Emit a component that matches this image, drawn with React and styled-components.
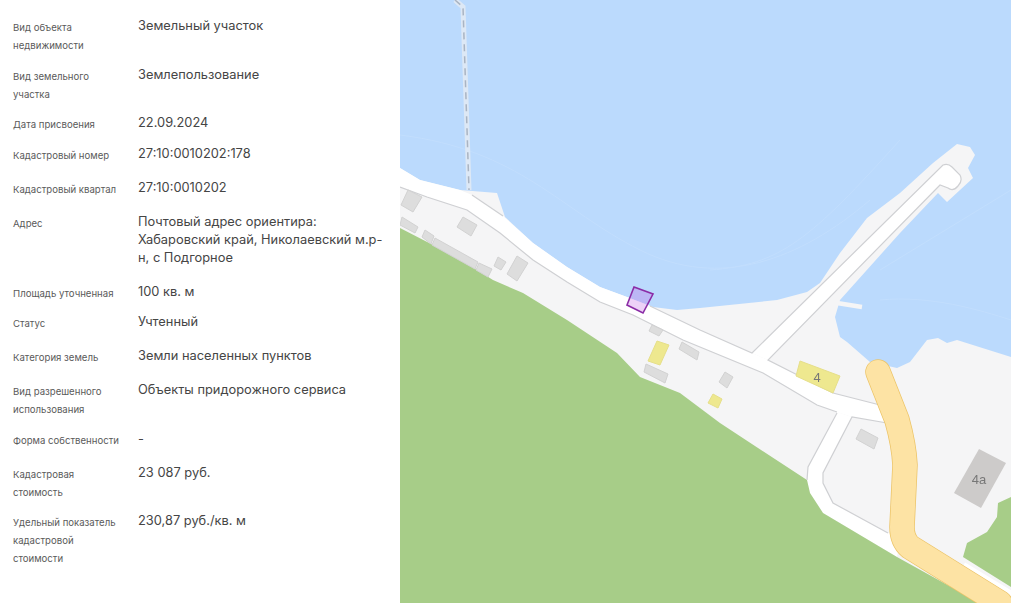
import React from "react";
import styled, { createGlobalStyle } from "styled-components";

const Global = createGlobalStyle`
  html, body { margin: 0; padding: 0; background: #fff; }
  body { font-family: Inter, "Noto Sans", sans-serif; overflow: hidden; }
`;

const Page = styled.div`
  display: flex;
  width: 1011px;
  height: 603px;
  overflow: hidden;
`;

const Panel = styled.section`
  flex: 0 0 400px;
  box-sizing: border-box;
  padding: 18px 0 0 13px;
  background: #fff;
`;

const Row = styled.div`
  display: grid;
  grid-template-columns: 110px 245px;
  column-gap: 15px;
  margin-bottom: ${(p) => p.$after}px;
`;

const Label = styled.div`
  font-size: 9.6px;
  line-height: 18px;
  color: #5a5a5a;
  position: relative;
  top: 0.5px;
`;

const Value = styled.div`
  font-size: 12.85px;
  line-height: 18px;
  color: #454545;
  position: relative;
  top: -1px;
`;

const MapPane = styled.div`
  flex: 1 1 auto;
  height: 603px;
  background: #bbdafd;
`;

const MapSvg = styled.svg`
  display: block;
  width: 611px;
  height: 603px;
  filter: blur(0.35px);
`;

const rows = [
  { label: "Вид объекта недвижимости", value: "Земельный участок", after: 13 },
  { label: "Вид земельного участка", value: "Землепользование", after: 12 },
  { label: "Дата присвоения", value: "22.09.2024", after: 13 },
  { label: "Кадастровый номер", value: "27:10:0010202:178", after: 16 },
  { label: "Кадастровый квартал", value: "27:10:0010202", after: 16 },
  { label: "Адрес", value: "Почтовый адрес ориентира: Хабаровский край, Николаевский м.р-\u200bн, с Подгорное", after: 16 },
  { label: "Площадь уточненная", value: "100 кв. м", after: 12 },
  { label: "Статус", value: "Учтенный", after: 16 },
  { label: "Категория земель", value: "Земли населенных пунктов", after: 16 },
  { label: "Вид разрешенного использования", value: "Объекты придорожного сервиса", after: 13 },
  { label: "Форма собственности", value: "-", after: 16 },
  { label: "Кадастровая стоимость", value: "23 087 руб.", after: 12 },
  { label: "Удельный показатель кадастровой стоимости", value: "230,87 руб./кв. м", after: 0 },
];

const LAND =
  "M400 168 L420 180 L460 190 L497 193 L505 217 L533 243 L567 267 L600 287 L627 297 L653 307 L677 310 L700 308 L777 300 L807 292 L820 283 L840 253 L867 218 L900 193 L933 163 L957 144 L970 147 L975 155 L968 168 L973 178 L947 202 L938 193 L900 233 L840 300 L835 317 L840 337 L847 342 L870 362 L897 368 L910 362 L927 340 L938 338 L947 343 L957 340 L1011 357 L1011 603 L400 603 Z";
const GREEN_MAIN =
  "M400 228 L433 245 L477 270 L493 280 L523 293 L567 320 L617 353 L640 377 L680 393 L720 423 L807 480 L810 493 L823 513 L897 557 L980 603 L400 603 Z";
const GREEN_RIGHT =
  "M1011 497 L998 503 L997 517 L987 532 L967 543 L963 557 L1011 587 Z";
const ROAD_MAIN =
  "M400 168 L420 180 L460 190 L472 195 L503 216 L533 243 L567 267 L600 287 L627 297 L650 306 L700 330 L752 353 L768 360 L833 393 L880 405 L900 409 L900 425 L887 423 L852 417 L837 412 L817 405 L763 373 L683 340 L633 315 L600 302 L567 282 L533 260 L500 233 L467 210 L427 197 L400 187 Z";
const ROAD_PIER =
  "M752 353 L943 165 Q948 163 952 167 L960 175 Q963 181 958 186 Q953 192 948 188 L940 185 L768 360 Z";
const ROAD_BRANCH =
  "M837 412 L808 467 L807 480 L810 493 L823 513 L897 557 L900 538 L888 533 L833 503 L823 483 L823 473 L852 417 Z";

const grayBuildings = [
  "408,190 422,197 413,212 401,205",
  "402,217 418,227 415,233 400,225",
  "463,217 477,225 471,236 457,227",
  "425,230 434,236 431,244 422,237",
  "435,238 478,262 475,269 432,245",
  "479,263 492,269 488,277 476,270",
  "498,257 506,262 501,270 494,266",
  "517,256 528,263 517,281 507,274",
  "652,325 663,330 659,336 649,331",
  "682,342 699,352 697,360 679,349",
  "646,364 668,374 665,383 644,372",
  "725,372 733,377 727,388 719,382",
  "861,429 878,438 874,449 856,439",
];
const yellowBuildings = [
  "657,341 669,345 660,365 648,361",
  "713,394 722,399 718,408 708,403",
  "800,361 840,376 833,393 796,376",
];
const edgeLines = [
  "M400 187 L427 197 L467 210 L500 233 L533 260 L567 282 L600 302 L633 315 L683 340 L763 373 L817 405 L837 412",
  "M472 195 L503 216",
  "M650 306 L700 330 L752 353 L943 165 Q948 163 952 167 L960 175 Q963 181 958 186 Q953 192 948 188 L940 185 L768 360 L833 393 L880 405",
  "M837 413 L808 467 L807 480",
  "M887 423 L852 417 L823 473 L823 483 L833 503 L888 533",
];

const ROAD_LINE = "M878 372 L897 420 Q904 445 905 465 L902 527 Q902 540 910 547 L1000 603";

function MapDrawing() {
  return (
    <MapSvg viewBox="400 0 611 603" xmlns="http://www.w3.org/2000/svg">
      <rect x="400" y="0" width="611" height="603" fill="#bbdafd" />
      <g fill="none" stroke="#c2defd" strokeWidth="1">
        <path d="M400 135 C520 150 560 210 640 250 S800 260 870 200" />
        <path d="M710 270 C780 265 810 240 900 140" />
        <path d="M880 300 C930 295 980 310 1011 320" />
        <path d="M880 270 L1011 190" />
      </g>
      <path d="M455 0 L463 7 L469 190" fill="none" stroke="#dde8f5" strokeWidth="5" />
      <path d="M455 0 L463 7 L469 190" fill="none" stroke="#aab4c2" strokeWidth="1.5" strokeDasharray="7 5" />
      <path d={LAND} fill="#f5f5f6" />
      <path d="M837 303 L862 307" stroke="#f5f5f6" strokeWidth="4.5" fill="none" />
      <path d={ROAD_MAIN} fill="#ffffff" />
      <path d={ROAD_PIER} fill="#ffffff" />
      <path d={ROAD_BRANCH} fill="#ffffff" />
      <path d={GREEN_MAIN} fill="#a7cd88" />
      <path d={GREEN_RIGHT} fill="#a7cd88" />
      <path d="M963 566 L1011 595" stroke="#ffffff" strokeWidth="8" fill="none" />
      <g fill="none" stroke="#cfd0d3" strokeWidth="1.2">
        {edgeLines.map((d) => (
          <path key={d} d={d} />
        ))}
      </g>
      <g fill="#dddddd" stroke="#d2d2d2" strokeWidth="1">
        {grayBuildings.map((p) => (
          <polygon key={p} points={p} />
        ))}
      </g>
      <g fill="#eee88f" stroke="#e6df8a" strokeWidth="1">
        {yellowBuildings.map((p) => (
          <polygon key={p} points={p} />
        ))}
      </g>
      <polygon points="979,449 1006,463 981,508 954,493" fill="#cdcbca" />
      <text x="817" y="382" fontFamily="'Liberation Sans', sans-serif" fontSize="13" fill="#777" textAnchor="middle">4</text>
      <text x="979" y="484" fontFamily="'Liberation Sans', sans-serif" fontSize="13" fill="#777" textAnchor="middle">4a</text>
      <path d={ROAD_LINE} stroke="#ecc468" strokeWidth="25.5" strokeLinecap="round" strokeLinejoin="round" fill="none" />
      <path d={ROAD_LINE} stroke="#fde3a4" strokeWidth="24" strokeLinecap="round" strokeLinejoin="round" fill="none" />
      <polygon points="634,287 653,294 643,313 627,305" fill="rgba(190,90,225,0.28)" stroke="#8b2ca6" strokeWidth="1.6" />
    </MapSvg>
  );
}

export default function App() {
  return (
    <Page>
      <Global />
      <Panel>
        {rows.map((r) => (
          <Row key={r.label} $after={r.after}>
            <Label>{r.label}</Label>
            <Value>{r.value}</Value>
          </Row>
        ))}
      </Panel>
      <MapPane>
        <MapDrawing />
      </MapPane>
    </Page>
  );
}
